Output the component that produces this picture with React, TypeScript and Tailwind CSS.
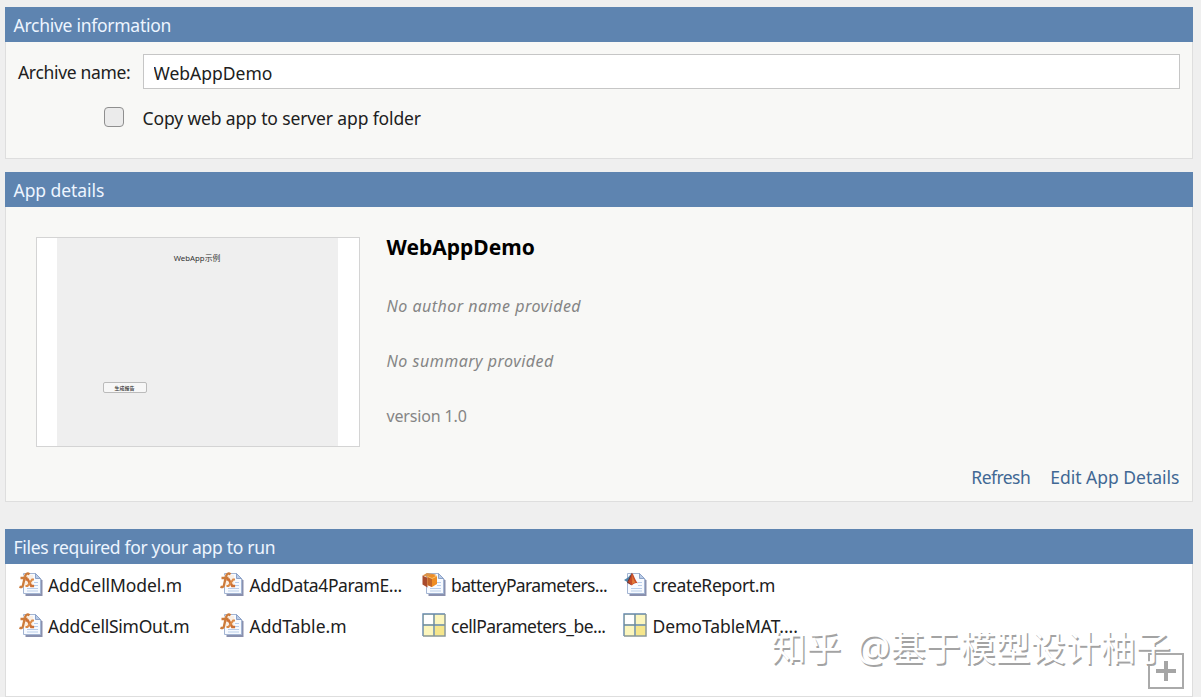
import { useState } from "react";
import type { ReactNode } from "react";

type FileKind = "function" | "class" | "script" | "data";

interface RequiredFile {
    name: string;
    kind: FileKind;
    tracking: string;
}

const files: RequiredFile[] = [
    { name: "AddCellModel.m", kind: "function", tracking: "tracking-[-0.1px]" },
    { name: "AddData4ParamE...", kind: "function", tracking: "tracking-[-0.38px]" },
    { name: "batteryParameters...", kind: "class", tracking: "tracking-[-0.62px]" },
    { name: "createReport.m", kind: "script", tracking: "tracking-[-0.38px]" },
    { name: "AddCellSimOut.m", kind: "function", tracking: "tracking-[-0.25px]" },
    { name: "AddTable.m", kind: "function", tracking: "tracking-[0px]" },
    { name: "cellParameters_be...", kind: "data", tracking: "tracking-[-0.52px]" },
    { name: "DemoTableMAT....", kind: "data", tracking: "tracking-[-0.05px]" },
];

function PageShape() {
    return (
        <>
            <path d="M6.5 2.5h11l6 6v15.5h-17z" fill="#8990ae" />
            <path d="M4.5 1.5h12l5 5v15h-17z" fill="#f7faff" stroke="#a3b5d3" />
            <path d="M16.5 1.5v5h5z" fill="#b9cbe6" stroke="#8ca2c8" />
            <path d="M15 10.5h4M15 13.5h4M8 16.5h11M8 19h11" stroke="#b9cdea" strokeWidth="1.2" />
        </>
    );
}

function FileIcon({ kind }: { kind: FileKind }) {
    if (kind === "data") {
        return (
            <svg className="shrink-0" width="24" height="24" viewBox="0 0 24 24" fill="none">
                <rect x="1" y="1" width="22" height="22" fill="#faf4a6" />
                <path d="M2 2h9v9H2z" fill="#fff" />
                <path d="M13 2h9v9h-9zM2 13h9v9H2z" fill="#fcf6bd" />
                <path d="M13 13h9v9h-9z" fill="#f6e68b" />
                <path d="M1 23V1h22M12 1v22M1 12h22" stroke="#6588ad" strokeWidth="1.4" />
                <path d="M23 1v22H1" stroke="#8b9695" strokeWidth="1.5" />
            </svg>
        );
    }

    return (
        <svg className="shrink-0" width="24" height="24" viewBox="0 0 24 24" fill="none">
            <PageShape />
            {kind === "function" && (
                <>
                    <path d="M4 3h10v11H3z" fill="#fbe9d8" opacity=".7" />
                    <path d="M10.5 2.4C8.6.6 6.6 1.6 6 4.6L4 13c-.5 2-1.6 2.5-3.5 1.6M1.5 6h7" stroke="#cd7b3a" strokeWidth="2.3" />
                    <path d="M6.5 7.5h2.3l3.4 6.5h2.9" stroke="#cd7135" strokeWidth="2.5" />
                    <path d="M15 7.5h-1.8L8.5 14H6.5" stroke="#dc8a47" strokeWidth="2.1" />
                </>
            )}
            {kind === "class" && (
                <>
                    <path d="M.5 3.5 5 1l9 1.5L9 6z" fill="#dc9348" />
                    <path d="m.5 3.5 5 2.5v9.5l-5-3z" fill="#a94b2d" />
                    <path d="m5.5 4.5 4.5-2 5 1.5v8L10 15l-4.5-2z" fill="#ef8d24" />
                    <path d="m5.5 4.5 4.5 2V15l-4.5-2z" fill="#c4662a" />
                    <path d="m5.5 4.5 4.5 2 5-2.5" stroke="#f6c36f" />
                </>
            )}
            {kind === "script" && (
                <>
                    <path d="m1 8 4-2.5 4-4.8L7.8 10 5 10.5z" fill="#4e83a9" />
                    <path d="M9 .7 5 8.2l-1 2.5 4 2.3z" fill="#6e3434" />
                    <path d="M9 .7c2 2.2 3 7.3 6.2 10.8-2.3-1-4.6-.1-6.4 2.1L5 9.8C7 8.3 7.8 4.4 9 .7z" fill="#c64c29" />
                    <path d="M9.5 2c.2 3.6 1.3 6.6 3 8.2L9 12z" fill="#e27b38" />
                </>
            )}
        </svg>
    );
}

function Panel({ title, className, titleClass, children }: {
    title: string;
    className: string;
    titleClass: string;
    children: ReactNode;
}) {
    return (
        <section className={`flex flex-col border border-t-0 border-[#dedede] ${className}`}>
            <h2 className={`-mx-px h-[35px] shrink-0 bg-[#5e84b0] pl-[9px] leading-[36px] text-[#edf5ff] ${titleClass}`}>
                {title}
            </h2>
            {children}
        </section>
    );
}

export default function App() {
    const [archiveName, setArchiveName] = useState("WebAppDemo");
    const [copyToServer, setCopyToServer] = useState(false);

    return (
        <main className="h-[697px] w-[1201px] overflow-hidden bg-[#efefef] pt-[6.5px] pr-[8.5px] pl-[4.5px] font-['Noto_Sans','Noto_Sans_CJK_SC',sans-serif] text-[17.5px] text-[#202020]">
            {/* Archive information */}
            <Panel title="Archive information" className="h-[152px] bg-[#f8f8f6]" titleClass="tracking-[-0.27px]">
                <div className="mt-3 flex h-9 items-center pr-3">
                    <label htmlFor="archive-name" className="w-[137px] shrink-0 pt-0.5 pl-[12.5px] tracking-[-0.33px]">Archive name:</label>
                    <input
                        id="archive-name"
                        className="h-[35px] min-w-0 flex-1 border border-[#c6c6c6] bg-white px-2.5 pt-0.5 outline-none"
                        value={archiveName}
                        onChange={(e) => setArchiveName(e.target.value)}
                    />
                </div>
                <label className="mt-[15px] flex items-center pl-[98px]">
                    <input
                        type="checkbox"
                        className="mb-0.5 h-5 w-5 appearance-none rounded-[4px] border border-[#8f8f8f] bg-[#ebebeb] checked:bg-[#5e84b0]"
                        checked={copyToServer}
                        onChange={(e) => setCopyToServer(e.target.checked)}
                    />
                    <span className="ml-[19px] tracking-[-0.13px]">Copy web app to server app folder</span>
                </label>
            </Panel>

            {/* App details */}
            <Panel title="App details" className="mt-[13.5px] h-[330px] bg-[#f8f8f6]" titleClass="tracking-[-0.05px]">
                <div className="flex pl-[30px]">
                    <div className="mt-[30px] h-[210px] w-[324px] border border-[#d4d4d4] bg-white px-5">
                        <div className="flex h-full w-[281px] flex-col bg-[#efefef]">
                            <p className="mt-[14px] text-center text-[7.8px] leading-3 text-[#333]">WebApp示例</p>
                            <div className="mt-[118px] ml-[46px] flex h-[11px] w-[44px] items-center justify-center rounded-[2px] border border-[#bbb] bg-[#f7f7f7] text-[5px] leading-[8px] font-medium text-[#333]">
                                生成报告
                            </div>
                        </div>
                    </div>
                    <div className="mt-[26px] ml-[27px] text-[16px] text-[#858585]">
                        <h1 className="text-[21px] leading-7 font-bold text-black">WebAppDemo</h1>
                        <p className="mt-[33px] leading-6 tracking-[0.48px] italic">No author name provided</p>
                        <p className="mt-[31px] leading-6 tracking-[0.5px] italic">No summary provided</p>
                        <p className="mt-[31px] leading-6 tracking-[-0.15px]">version 1.0</p>
                    </div>
                </div>
                <div className="mt-[18px] flex justify-end gap-5 pr-3 leading-6 text-[#416894]">
                    <button className="tracking-[-0.55px]">Refresh</button>
                    <button>Edit App Details</button>
                </div>
            </Panel>

            {/* Required files */}
            <Panel title="Files required for your app to run" className="mt-[27px] h-[168px] bg-white" titleClass="tracking-[-0.32px]">
                <div className="relative z-10 -mt-px grid grid-cols-[201.5px_201.5px_201.5px_201.5px] pl-[13px]">
                    {files.map((file) => (
                        <div key={file.name} className="flex h-[41px] items-center whitespace-nowrap">
                            <FileIcon kind={file.kind} />
                            <span className={`mt-[3px] ml-[5.5px] leading-5 ${file.tracking}`}>{file.name}</span>
                        </div>
                    ))}
                </div>
                <div className="relative mt-2 mr-2 ml-auto h-9 w-9">
                    <button aria-label="Add file" className="flex h-9 w-9 items-center justify-center border-2 border-[#aaa] bg-white">
                        <svg width="20" height="20" viewBox="0 0 20 20">
                            <path d="M10 0v20M0 10h20" stroke="#a5a5a5" strokeWidth="4" />
                        </svg>
                    </button>
                    <span className="pointer-events-none absolute right-[13px] bottom-[23px] text-[35px] leading-[36px] [word-spacing:6px] whitespace-nowrap text-white [text-shadow:1.5px_1.5px_0.5px_#a3a3a3]">
                        知乎 <span className="text-[38px] leading-none">@</span>基于模型设计柚子
                    </span>
                </div>
            </Panel>
        </main>
    );
}
